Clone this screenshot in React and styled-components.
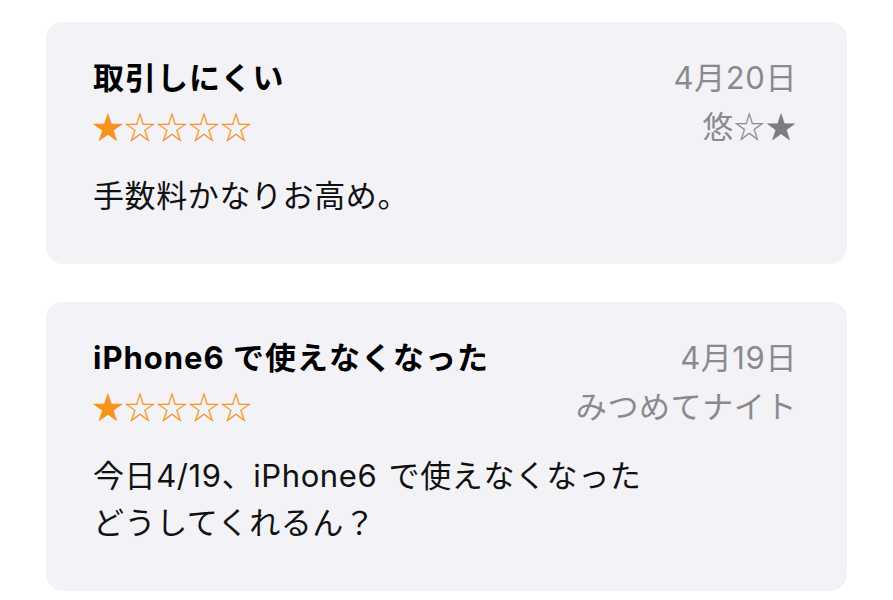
import React from "react";
import styled, { createGlobalStyle } from "styled-components";

const Global = createGlobalStyle`
  html, body { margin: 0; padding: 0; background: #ffffff; }
  body {
    font-family: Inter, "Noto Sans CJK JP", "Noto Sans", sans-serif;
    -webkit-font-smoothing: antialiased;
  }
`;

const Page = styled.div`
  display: flex;
  flex-direction: column;
  gap: 38px;
  padding: 22px 46px 0 46px;
  width: 801px;
`;

const Card = styled.section`
  background: #f2f2f7;
  border-radius: 17px;
  padding: 36px 50px 45px 47px;
  display: flex;
  flex-direction: column;
  gap: 25px;
`;

const Header = styled.div`
  display: flex;
  justify-content: space-between;
  align-items: flex-start;
`;

const Column = styled.div`
  display: flex;
  flex-direction: column;
  gap: 9px;
  align-items: ${(p) => (p.$right ? "flex-end" : "flex-start")};
`;

const Title = styled.h2`
  margin: 0;
  font-size: 31px;
  line-height: 40px;
  font-weight: 700;
  color: #000;
  letter-spacing: 1px;
  word-spacing: 0px;
`;

const Meta = styled.div`
  height: 40px;
  font-size: 31px;
  line-height: 40px;
  color: #8a8a8e;
  white-space: nowrap;
  letter-spacing: 0.6px;
`;

const Glyph = styled.span`
  font-family: "Noto Sans CJK JP", sans-serif;
  line-height: 1;
  color: ${(p) => p.$color || "inherit"};
`;

const Stars = styled.div`
  display: flex;
  height: 40px;
  font-family: "Noto Sans CJK JP", sans-serif;
  font-size: 32px;
  line-height: 36px;
  color: #f7941d;
  margin-left: -1px;
`;

const Body = styled.p`
  margin: 0;
  font-size: 31px;
  line-height: 47px;
  color: #111;
  letter-spacing: 0.6px;
  word-spacing: 2px;
`;

const reviews = [
  {
    title: "取引しにくい",
    date: "4月20日",
    author: (
      <>
        悠<Glyph>☆</Glyph>
        <Glyph $color="#7c7c80">★</Glyph>
      </>
    ),
    body: ["手数料かなりお高め。"],
  },
  {
    title: "iPhone6 で使えなくなった",
    date: "4月19日",
    author: "みつめてナイト",
    body: ["今日4/19、iPhone6 で使えなくなった", "どうしてくれるん？"],
  },
];

export default function App() {
  return (
    <>
      <Global />
      <Page>
        {reviews.map((r, i) => (
          <Card key={i}>
            <Header>
              <Column>
                <Title>{r.title}</Title>
                <Stars>★☆☆☆☆</Stars>
              </Column>
              <Column $right>
                <Meta>{r.date}</Meta>
                <Meta>{r.author}</Meta>
              </Column>
            </Header>
            <Body>
              {r.body.map((line, j) => (
                <React.Fragment key={j}>
                  {j > 0 && <br />}
                  {line}
                </React.Fragment>
              ))}
            </Body>
          </Card>
        ))}
      </Page>
    </>
  );
}
